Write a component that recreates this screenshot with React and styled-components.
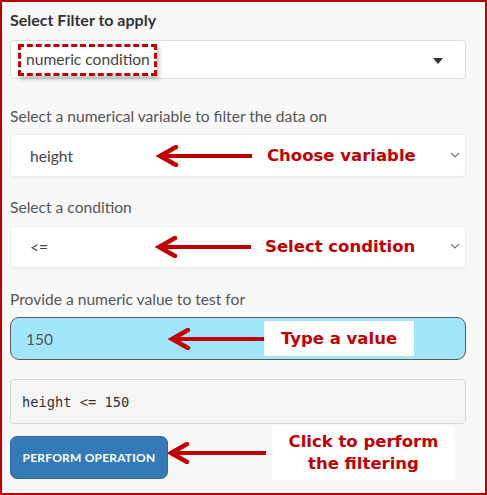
import React from "react";
import styled, { createGlobalStyle } from "styled-components";

const GlobalStyle = createGlobalStyle`
  html, body {
    margin: 0;
    padding: 0;
    background: #fff;
  }
  * {
    box-sizing: border-box;
  }
`;

const Frame = styled.div`
  width: 487px;
  height: 495px;
  border: 2px solid #c00000;
  background-color: #f8f8f8;
  padding: 8px 19px 0 8px;
  font-family: Lato, "Open Sans", sans-serif;
  color: #555;
  display: flex;
  flex-direction: column;
`;

const Title = styled.div`
  font-size: 16px;
  font-weight: 700;
  line-height: 20px;
  color: #333;
`;

const Label = styled.div`
  font-size: 15.6px;
  line-height: 20px;
  color: #555;
  margin-top: ${p => p.$mt}px;
`;

const Field = styled.div`
  position: relative;
  display: flex;
  align-items: center;
  height: ${p => p.$h}px;
  margin-top: ${p => p.$mt}px;
  background-color: #fff;
  border: 1px solid #ddd;
  border-radius: 4px;
  font-size: 15.6px;
  color: #444;
`;

const PlainSelect = styled(Field)`
  border-color: #eee;
  box-shadow: 0 1px 1px rgba(0, 0, 0, 0.04);
  padding-left: 19px;
`;

const FilterSelect = styled(Field)`
  padding-left: 7px;
`;

const Marked = styled.span`
  display: inline-flex;
  align-items: center;
  height: 32px;
  padding: 0 4px 2px 5px;
  border: 3px dashed #c00000;
  box-shadow: 2px 3px 4px rgba(0, 0, 0, 0.25);
  color: #444;
`;

const Caret = styled.span`
  position: absolute;
  right: 22px;
  top: 50%;
  margin-top: -2px;
  width: 0;
  height: 0;
  border-left: 5px solid transparent;
  border-right: 5px solid transparent;
  border-top: 6px solid #333;
`;

const Chevron = styled.svg`
  position: absolute;
  right: 5px;
  top: 50%;
  margin-top: -4px;
`;

const NumberInput = styled(Field)`
  background-color: #a2e6fb;
  border: 1px solid #5a5a5a;
  border-radius: 9px;
  padding-left: 15px;
  color: #555;
`;

const Output = styled(Field)`
  background-color: #f5f5f5;
  border: 1px solid #d6d6d6;
  padding-left: 11px;
  font-family: "DejaVu Sans Mono", "Liberation Mono", monospace;
  font-size: 13.7px;
  color: #333;
`;

const Button = styled.button`
  margin-top: 12px;
  width: 158px;
  height: 43px;
  border: 1px solid #2e6da4;
  border-radius: 7px;
  background-color: #337ab7;
  color: #fff;
  font-family: Lato, "Open Sans", sans-serif;
  font-size: 12px;
  font-weight: 700;
  letter-spacing: 0.2px;
  text-transform: uppercase;
  padding: 0;
`;

const Note = styled.div`
  position: absolute;
  left: ${p => p.$left}px;
  top: ${p => p.$top}px;
  display: flex;
  align-items: center;
`;

const NoteText = styled.div`
  font-family: "DejaVu Sans", Verdana, sans-serif;
  font-weight: 700;
  font-size: 16.5px;
  line-height: 22px;
  color: #c00000;
  white-space: nowrap;
  margin-left: ${p => p.$ml || 0}px;
`;

const NoteBox = styled(NoteText)`
  background: #fff;
  width: ${p => p.$w}px;
  height: ${p => p.$h}px;
  display: flex;
  flex-direction: column;
  align-items: center;
  justify-content: center;
`;

const Arrow = ({ width }) => (
  <svg width={width} height="22" viewBox={`0 0 ${width} 22`}>
    <path d={`M3 11 H${width}`} stroke="#c00000" strokeWidth="4" />
    <path
      d="M20 2 L4 11 L20 20"
      fill="none"
      stroke="#c00000"
      strokeWidth="4.5"
      strokeLinecap="round"
      strokeLinejoin="miter"
    />
  </svg>
);

const Down = () => (
  <Chevron width="10" height="7" viewBox="0 0 10 7">
    <path d="M1 1 L5 5 L9 1" fill="none" stroke="#777" strokeWidth="1.2" />
  </Chevron>
);

const App = () => {
  return (
    <>
      <GlobalStyle />
      <Frame>
        <Title>Select Filter to apply</Title>
        <FilterSelect $h={39} $mt={10}>
          <Marked>numeric condition</Marked>
          <Caret />
        </FilterSelect>

        <Label $mt={27}>Select a numerical variable to filter the data on</Label>
        <PlainSelect $h={43} $mt={8}>
          height
          <Down />
          <Note $left={145} $top={10}>
            <Arrow width={96} />
            <NoteText $ml={15}>Choose variable</NoteText>
          </Note>
        </PlainSelect>

        <Label $mt={20}>Select a condition</Label>
        <PlainSelect $h={42} $mt={9}>
          &lt;=
          <Down />
          <Note $left={144} $top={9}>
            <Arrow width={96} />
            <NoteText $ml={14}>Select condition</NoteText>
          </Note>
        </PlainSelect>

        <Label $mt={21}>Provide a numeric value to test for</Label>
        <NumberInput $h={43} $mt={8}>
          150
          <Note $left={157} $top={3}>
            <Arrow width={96} />
            <NoteBox $w={150} $h={35}>Type a value</NoteBox>
          </Note>
        </NumberInput>

        <Output $h={45} $mt={19}>height &lt;= 150</Output>

        <div style={{ position: "relative" }}>
          <Button type="button">Perform Operation</Button>
          <Note $left={157} $top={2}>
            <Arrow width={99} />
            <NoteBox $w={183} $h={54} $ml={6}>
              <span>Click to perform</span>
              <span>the filtering</span>
            </NoteBox>
          </Note>
        </div>
      </Frame>
    </>
  );
};

export default App;
